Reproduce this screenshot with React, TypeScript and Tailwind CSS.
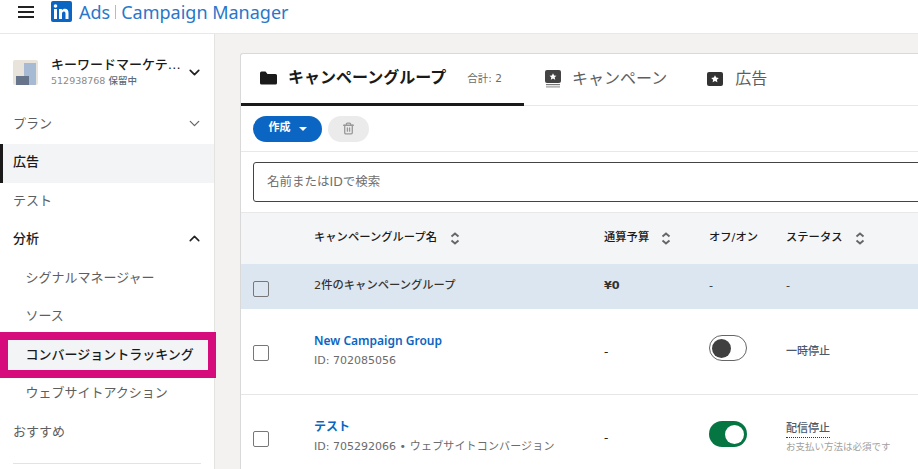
import { ChevronDown, ChevronUp, Trash2 } from 'lucide-react';

function SortIcon() {
  return (
    <svg width="10" height="13" viewBox="0 0 10 13" fill="none" stroke="#666666" strokeWidth="1.9" className="shrink-0">
      <path d="M1.5 4.5 5 1.5l3.5 3" />
      <path d="M1.5 8.5 5 11.5l3.5-3" />
    </svg>
  );
}

function FolderIcon() {
  return (
    <svg width="17" height="14" viewBox="0 0 17 14" fill="#1a1a1a">
      <path d="M0 2a1.5 1.5 0 0 1 1.5-1.5h4L7.5 3h8A1.5 1.5 0 0 1 17 4.500V12a1.500 1.500 0 0 1-1.500 1.500h-14A1.500 1.500 0 0 1 0 12z" />
    </svg>
  );
}

function CampaignIcon() {
  return (
    <svg width="16" height="18" viewBox="0 0 16 18">
      <rect x="0" y="0" width="16" height="13" rx="2" fill="#444444" />
      <path d="M8 3.200l1.100 2.200 2.400.3-1.800 1.600.5 2.400L8 8.500l-2.200 1.200.5-2.400-1.800-1.600 2.400-.3z" fill="#ffffff" />
      <rect x="1" y="14" width="14" height="1.200" fill="#777777" />
      <rect x="1" y="16.300" width="14" height="1.200" fill="#999999" />
    </svg>
  );
}

function AdIcon() {
  return (
    <svg width="16" height="14" viewBox="0 0 16 14">
      <rect x="0" y="0" width="16" height="14" rx="2" fill="#333333" />
      <path d="M8 3.200l1.200 2.400 2.600.3-1.900 1.800.5 2.600L8 9.100l-2.400 1.200.5-2.600-1.900-1.800 2.600-.3z" fill="#ffffff" />
    </svg>
  );
}

function Logo() {
  return (
    <svg width="21" height="21" viewBox="0 0 21 21">
      <rect width="21" height="21" rx="2" fill="#0a66c2" />
      <rect x="3" y="8" width="3" height="10" fill="#ffffff" />
      <circle cx="4.500" cy="5" r="1.800" fill="#ffffff" />
      <path d="M8 8h2.900v1.400c.5-.9 1.600-1.600 3-1.600 2.800 0 3.600 1.800 3.600 4.300V18h-3v-5.200c0-1.300-.3-2.400-1.600-2.400s-1.900 1-1.900 2.400V18H8z" fill="#ffffff" />
    </svg>
  );
}

function Checkbox() {
  return <div className="w-4 h-4 rounded-[2px] border border-[#777777] shrink-0" />;
}

function NavRow({ label, active, bold, sub, chevron, first }: { label: string; active?: boolean; bold?: boolean; sub?: boolean; chevron?: 'up' | 'down'; first?: boolean }) {
  return (
    <div className={`flex items-center justify-between pr-[11px] text-[13px] ${first ? 'h-[40px] pb-[1px]' : 'h-[38.5px] pb-[3px]'} ${sub ? 'pl-[25.500px]' : 'pl-[13px]'} ${active ? 'bg-[#f3f4f6]' : ''} ${bold ? 'text-[#1a1a1a] font-medium' : 'text-[#5e5e5e]'}`}>
      <span>{label}</span>
      {chevron === 'down' && <ChevronDown size={17} strokeWidth={1.800} className="text-[#666666]" />}
      {chevron === 'up' && <ChevronUp size={17} strokeWidth={2.200} className="text-[#222222]" />}
    </div>
  );
}

function TableRow({ name, id, kind, toggle, status, note, underline }: { name: string; id: string; kind?: string; toggle: boolean; status: string; note?: string; underline?: boolean }) {
  return (
    <div className="h-[86px] flex items-center border-b border-[#e6e6e6]">
      <div className="w-[73px] pl-[12px] pt-[2px]"><Checkbox /></div>
      <div className="w-[290px] flex flex-col gap-[4px] -mt-[2px]">
        <span className="text-[#0a66c2] font-['Noto_Sans','Noto_Sans_CJK_JP',sans-serif] text-[12px] font-semibold leading-[16px]">{name}</span>
        <span className="text-[#6b6b6b] text-[11px] leading-[16px] whitespace-nowrap">{id}{kind && <span className="tracking-[0.15px]"> • {kind}</span>}</span>
      </div>
      <div className="w-[105px] text-[12px] text-[#222222]">-</div>
      <div className="w-[77px] -mt-[7px]">
        {toggle ? (
          <div className="w-[38px] h-[26px] rounded-full bg-[#057642] flex items-center justify-end pr-[3px]">
            <div className="w-[19px] h-[19px] rounded-full bg-white" />
          </div>
        ) : (
          <div className="w-[38px] h-[26px] rounded-full border border-[#666666] bg-white flex items-center pl-[2px]">
            <div className="w-[19px] h-[19px] rounded-full bg-[#404040]" />
          </div>
        )}
      </div>
      <div className="flex flex-col">
        <span className={`text-[11px] leading-[16px] font-medium text-[#4d5a6b] w-fit ${underline ? 'border-b border-dotted border-[#1f3a5f]' : ''}`}>{status}</span>
        {note && <span className="text-[9.500px] leading-[14px] mt-[2px] text-[#a0a0a0] whitespace-nowrap">{note}</span>}
      </div>
    </div>
  );
}

export default function App() {
  return (
    <div className="relative w-[918px] h-[469px] overflow-hidden bg-[#f3f2f0] flex flex-col font-['DejaVu_Sans','Noto_Sans_CJK_JP',sans-serif]">
      {/* top bar */}
      <header className="h-[34px] shrink-0 bg-white border-b border-[#e8e8e8] flex items-center pl-[18px]">
        <div className="flex flex-col gap-[3px] w-[16px] mr-[17px] -mt-[9px]">
          <div className="h-[2px] bg-[#222222]" />
          <div className="h-[2px] bg-[#222222]" />
          <div className="h-[2px] bg-[#222222]" />
        </div>
        <div className="-mt-[10px] flex items-center font-['Noto_Sans',sans-serif] text-[18px] text-[#2977c9] leading-none">
          <Logo />
          <span className="ml-[7px]">Ads</span>
          <span className="mx-[5px] w-px h-[14px] bg-[#9cc0e8]" />
          <span>Campaign Manager</span>
        </div>
      </header>

      <div className="flex flex-1 min-h-0">
        {/* sidebar */}
        <aside className="w-[215px] shrink-0 bg-white border-r border-[#e3e3e0] flex flex-col">
          <div className="h-[70px] flex items-center pl-[13px] pr-[11px] pt-[6px]">
            <div className="relative w-[25px] h-[25px] rounded-[2px] bg-[#e8e4dc] overflow-hidden shrink-0">
              <div className="absolute right-[2px] top-[3px] w-[12px] h-[22px] bg-[#a6bbd3]" />
              <div className="absolute left-[3px] bottom-0 w-[13px] h-[9px] bg-[#66758a]" />
            </div>
            <div className="ml-[13px] flex-1 min-w-0">
              <div className="text-[13px] leading-[17px] font-medium text-[#1a1a1a] whitespace-nowrap">キーワードマーケテ…</div>
              <div className="text-[9.500px] leading-[14px] mt-[1px] text-[#8a8a8a] whitespace-nowrap">512938768 <span className="font-medium text-[#5e6b7a]">保留中</span></div>
            </div>
            <ChevronDown size={17} strokeWidth={2.400} className="text-[#222222] shrink-0" />
          </div>
          <NavRow label="プラン" chevron="down" first />
          <div className="relative">
            <div className="absolute left-0 top-0 bottom-0 w-[3px] bg-[#1a1a1a]" />
            <NavRow label="広告" active bold />
          </div>
          <NavRow label="テスト" />
          <NavRow label="分析" bold chevron="up" />
          <NavRow label="シグナルマネージャー" sub />
          <NavRow label="ソース" sub />
          <NavRow label="コンバージョントラッキング" sub active bold />
          <NavRow label="ウェブサイトアクション" sub />
          <NavRow label="おすすめ" />
          <div className="mx-[13px] mt-[11px] border-t border-[#e3e3e3]" />
        </aside>

        {/* main */}
        <main className="flex-1 min-w-0 pl-[25px] pt-[19px]">
          <div className="w-[700px] bg-white rounded-tl-[3px] border-l border-t border-[#d9d9d9]">
            <div className="h-[52px] flex border-b border-[#e8e8e8]">
              <div className="w-[283px] -mb-px border-b-[3px] border-[#1a1a1a] flex items-center pl-[19px] pb-[2px]">
                <FolderIcon />
                <span className="ml-[11px] text-[16px] font-bold text-[#1a1a1a] whitespace-nowrap">キャンペーングループ</span>
                <span className="ml-[21px] mt-[2px] text-[10.500px] text-[#6b6b6b] whitespace-nowrap">合計: 2</span>
              </div>
              <div className="flex items-center pl-[21px] pb-[2px]">
                <CampaignIcon />
                <span className="ml-[11px] text-[16px] text-[#5e5e5e]">キャンペーン</span>
              </div>
              <div className="flex items-center pl-[40px] pb-[2px]">
                <AdIcon />
                <span className="ml-[12px] text-[16px] text-[#5e5e5e]">広告</span>
              </div>
            </div>
            <div className="h-[46px] flex items-center gap-[6px] pl-[12px] border-b border-[#e8e8e8]">
              <div className="w-[69px] h-[26px] rounded-full bg-[#0a66c2] flex items-center justify-center gap-[8px] text-white text-[11px] font-bold">
                <span>作成</span>
                <svg width="8" height="4" viewBox="0 0 8 4" fill="#ffffff"><path d="M0 0h8L4 4z" /></svg>
              </div>
              <div className="w-[41px] h-[26px] rounded-full bg-[#ebebeb] flex items-center justify-center">
                <Trash2 size={13} strokeWidth={2.400} className="text-[#999999]" />
              </div>
            </div>
            <div className="h-[61px] pl-[12px] pt-[10px] border-b border-[#e8e8e8]">
              <div className="h-[40px] rounded-[3px] border border-[#444444] flex items-center pl-[13px] text-[12.500px] text-[#6f6f6f]">名前またはIDで検索</div>
            </div>
            <div className="h-[51px] bg-[#f4f5f7] flex items-center text-[11.300px] font-medium text-[#1a1a1a]">
              <div className="w-[73px]" />
              <div className="w-[290px] flex items-center gap-[13px]"><span>キャンペーングループ名</span><SortIcon /></div>
              <div className="w-[105px] flex items-center gap-[12px]"><span>通算予算</span><SortIcon /></div>
              <div className="w-[77px]">オフ/オン</div>
              <div className="flex items-center gap-[12px]"><span>ステータス</span><SortIcon /></div>
            </div>
            <div className="h-[45px] bg-[#dce6f1] flex items-center text-[11.300px] font-medium text-[#333333]">
              <div className="w-[73px] pl-[12px] pt-[4px]"><Checkbox /></div>
              <div className="w-[290px]">2件のキャンペーングループ</div>
              <div className="w-[105px] font-bold">¥0</div>
              <div className="w-[77px]">-</div>
              <div>-</div>
            </div>
            <TableRow name="New Campaign Group" id="ID: 702085056" toggle={false} status="一時停止" />
            <TableRow name="テスト" id="ID: 705292066" kind="ウェブサイトコンバージョン" toggle status="配信停止" note="お支払い方法は必須です" underline />
          </div>
        </main>
      </div>

      {/* annotation over the sidebar row */}
      <div className="absolute left-0 top-[332px] w-[216px] h-[46px] border-[8px] border-[#d60b7c]" />
    </div>
  );
}
